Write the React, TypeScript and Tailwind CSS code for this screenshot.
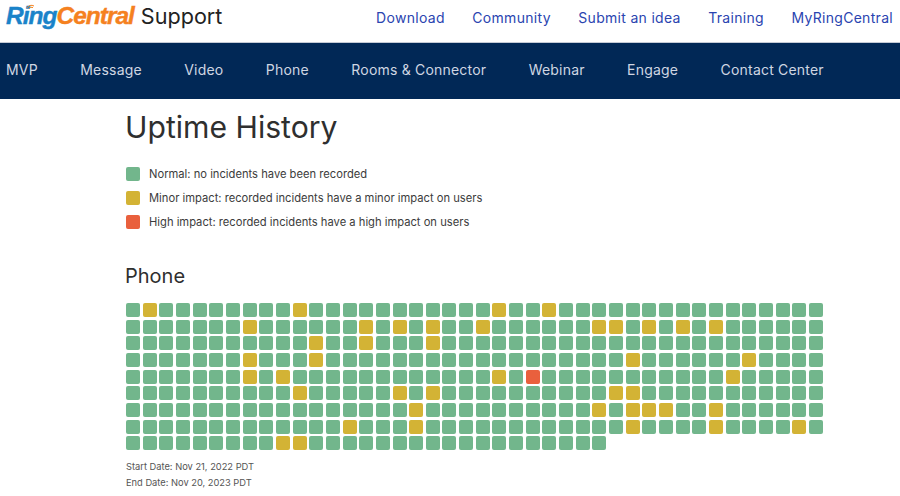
const topLinks = ["Download", "Community", "Submit an idea", "Training", "MyRingCentral"];
const navItems = ["MVP", "Message", "Video", "Phone", "Rooms & Connector", "Webinar", "Engage", "Contact Center"];

// column index of every non-green day, per row
const minor: number[][] = [
  [1, 10, 22, 25],
  [7, 14, 16, 18, 21, 28, 29, 31, 33, 35],
  [11, 14, 18],
  [7, 11, 30, 37],
  [7, 9, 22, 36],
  [10, 16, 18, 29, 30],
  [17, 28, 30, 31, 32, 35],
  [13, 17, 30, 35, 40],
  [9, 10],
];
const COLS = 42;
const LAST_ROW_COLS = 29;

function Cell({ row, col }: { row: number; col: number }) {
  const isHigh = row === 4 && col === 24;
  const isMinor = minor[row].includes(col);
  return (
    <div
      className={
        "h-3.5 w-3.5 rounded-[2px] " +
        (isHigh ? "bg-[#e9603d]" : isMinor ? "bg-[#d3b335]" : "bg-[#72b68c]")
      }
    />
  );
}

function Legend({ color, label }: { color: string; label: string }) {
  return (
    <div className="flex h-6 items-center gap-[9px] text-[11.2px] text-[#3c3c3c]">
      <span className={"h-3.5 w-3.5 rounded-[2px] " + color} />
      <span>{label}</span>
    </div>
  );
}

export default function App() {
  return (
    <div className="h-[496px] w-[900px] overflow-hidden bg-white font-['Inter',sans-serif]">
      <header className="flex h-[42px] items-start justify-between pl-1.5 pr-[7px] pt-[5px]">
        <div className="flex items-center gap-[7px]">
          <div className="relative font-['Liberation_Sans',sans-serif] text-[24.5px] font-bold italic leading-[22px] tracking-[-1px] [-webkit-text-stroke:0.4px_currentColor]">
            <span className="text-[#1a83c9]">Ring</span>
            <span className="text-[#f5811f]">Central</span>
            <svg className="absolute left-[20px] top-[-2px]" width="10" height="7" viewBox="0 0 10 7" fill="none">
              <path d="M1 5a5 5 0 0 1 7-2M3 6a3 3 0 0 1 4-1.5" stroke="#f5811f" strokeWidth="1" />
            </svg>
          </div>
          <span className="text-[21.6px] leading-[22px] text-[#222]">Support</span>
        </div>
        <nav className="flex gap-[27.5px] pt-[2px] text-[14px] tracking-[0.3px] text-[#2a44b0]">
          {topLinks.map((l) => (
            <a key={l}>{l}</a>
          ))}
        </nav>
      </header>
      <nav className="flex h-[57px] items-center gap-[42.4px] border-t border-[#c5cbd6] bg-[#012856] pb-[3px] pl-1.5 text-[14px] tracking-[0.2px] text-[#cfd6e2]">
        {navItems.map((n) => (
          <a key={n}>{n}</a>
        ))}
      </nav>
      <main className="pl-[126px]">
        <h1 className="-ml-px mt-2 text-[30.15px] leading-[40px] text-[#2f2f2f]">Uptime History</h1>
        <div className="mt-[15px]">
          <Legend color="bg-[#72b68c]" label="Normal: no incidents have been recorded" />
          <Legend color="bg-[#d3b335]" label="Minor impact: recorded incidents have a minor impact on users" />
          <Legend color="bg-[#e9603d]" label="High impact: recorded incidents have a high impact on users" />
        </div>
        <h2 className="-ml-px mt-[28px] text-[20px] leading-[28px] text-[#2f2f2f]">Phone</h2>
        <div className="mt-[13px] grid w-[700px] grid-cols-[repeat(42,14px)] gap-x-[2.67px] gap-y-[2.67px]">
          {minor.map((_, row) =>
            Array.from({ length: row === 8 ? LAST_ROW_COLS : COLS }, (_, col) => (
              <Cell key={row + "-" + col} row={row} col={col} />
            ))
          )}
        </div>
        <div className="mt-[9px] text-[9.3px] leading-4 text-[#555]">
          <div>Start Date: Nov 21, 2022 PDT</div>
          <div>End Date: Nov 20, 2023 PDT</div>
        </div>
      </main>
    </div>
  );
}
